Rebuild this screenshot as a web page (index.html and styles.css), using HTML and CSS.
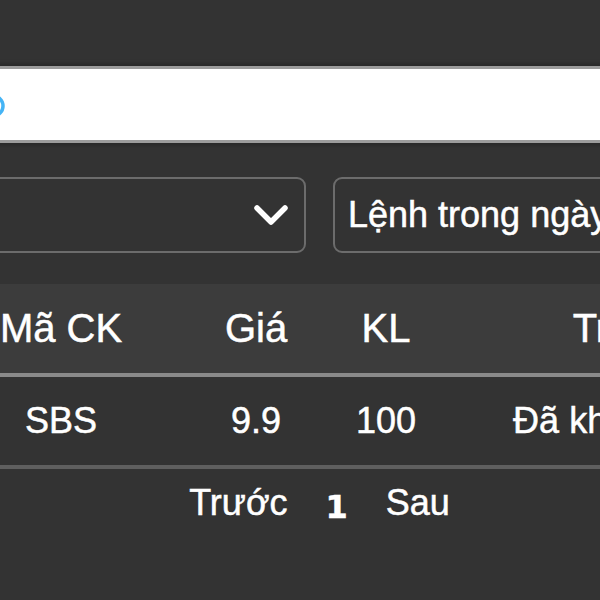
FILE: index.html
```
<!DOCTYPE html>
<html lang="vi">
<head>
    <meta charset="UTF-8">
    <meta name="viewport" content="width=device-width, initial-scale=1.0">
    <title>Sổ lệnh</title>
    <link rel="stylesheet" href="styles.css">
</head>
<body>
    <div class="screen">
        <div class="search">
            <svg class="search-icon" width="26" height="30" viewBox="0 0 26 30">
                <circle cx="12" cy="16" r="10" fill="none" stroke="#45b4f5" stroke-width="3.5"/>
            </svg>
            <input class="search-input" type="text">
        </div>

        <div class="filters">
            <div class="select">
                <span class="select-text"></span>
                <svg class="chevron" width="36" height="24" viewBox="0 0 36 24">
                    <path d="M4 5 L18 19 L32 5" fill="none" stroke="#fff" stroke-width="5.5" stroke-linecap="round" stroke-linejoin="round"/>
                </svg>
            </div>
            <div class="select">
                <span class="select-text">Lệnh trong ngày</span>
            </div>
        </div>

        <div class="orders">
            <div class="orders-head">
                <div class="cell">Mã CK</div>
                <div class="cell">Giá</div>
                <div class="cell">KL</div>
                <div class="cell">Trạng thái</div>
            </div>
            <div class="orders-row">
                <div class="cell">SBS</div>
                <div class="cell">9.9</div>
                <div class="cell">100</div>
                <div class="cell">Đã khớp một phần</div>
            </div>
        </div>

        <div class="pager">
            <span class="pager-link">Trước</span>
            <span class="page-num">1</span>
            <span class="pager-link">Sau</span>
        </div>
    </div>
</body>
</html>
```

FILE: styles.css
```
body {
    margin: 0;
    background-color: #333333;
    color: #ffffff;
    font-family: "Liberation Sans", Arial, sans-serif;
    -webkit-text-stroke: 0.5px #ffffff;
    overflow: hidden;
}

/* the screenshot is cropped: content starts left of the window */
.screen {
    margin-left: -58px;
    width: 755px;
    padding-top: 66px;
}

.search {
    display: flex;
    align-items: center;
    height: 71px;
    padding-left: 39px;
    background: #ffffff;
    border-top: 3px solid #9c9c9c;
    border-bottom: 3px solid #9c9c9c;
    box-shadow: 0 0 3px 3px #2a2a2a;
}

.search-icon {
    flex: none;
}

.search-input {
    flex: 1;
    border: none;
    outline: none;
    background: transparent;
    font-size: 30px;
}

.filters {
    display: grid;
    grid-template-columns: 1fr 1fr;
    gap: 27px;
    margin-top: 34px;
}

.select {
    display: flex;
    align-items: center;
    justify-content: space-between;
    height: 72px;
    padding: 0 15px 0 13px;
    border: 2px solid #6c6c6c;
    border-radius: 9px;
}

.select-text {
    font-size: 36px;
    white-space: nowrap;
}

.orders {
    margin-top: 31px;
    width: 942px;
}

.orders-head,
.orders-row {
    display: grid;
    grid-template-columns: 238px 152px 108px 444px;
    align-items: center;
    text-align: center;
    white-space: nowrap;
}

.orders-head {
    height: 89px;
    background: #3c3c3c;
    border-bottom: 4px solid #8a8a8a;
    font-size: 40px;
}

.orders-row {
    height: 88px;
    border-bottom: 4px solid #5f5f5f;
    font-size: 36px;
}

.pager {
    display: flex;
    justify-content: center;
    align-items: flex-start;
    gap: 38px;
    padding-top: 13px;
    font-size: 36px;
}

.page-num {
    padding-top: 6px;
    font-family: "DejaVu Sans", sans-serif;
    font-weight: bold;
    font-size: 32px;
}
```
